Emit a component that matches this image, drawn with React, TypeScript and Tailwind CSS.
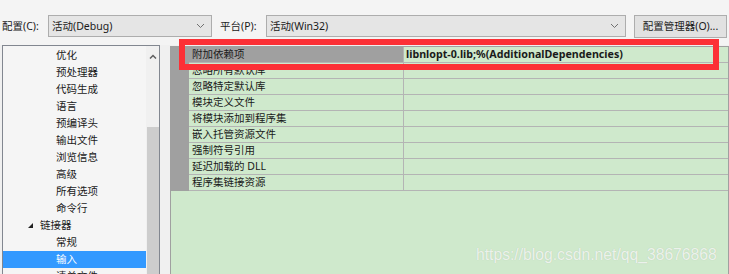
import React from 'react';

const treeItems = [
  { label: '优化', level: 2 },
  { label: '预处理器', level: 2 },
  { label: '代码生成', level: 2 },
  { label: '语言', level: 2 },
  { label: '预编译头', level: 2 },
  { label: '输出文件', level: 2 },
  { label: '浏览信息', level: 2 },
  { label: '高级', level: 2 },
  { label: '所有选项', level: 2 },
  { label: '命令行', level: 2 },
  { label: '链接器', level: 1 },
  { label: '常规', level: 2 },
  { label: '输入', level: 2, selected: true },
  { label: '清单文件', level: 2 },
];

const props = [
  '附加依赖项',
  '忽略所有默认库',
  '忽略特定默认库',
  '模块定义文件',
  '将模块添加到程序集',
  '嵌入托管资源文件',
  '强制符号引用',
  '延迟加载的 DLL',
  '程序集链接资源',
];

const Chevron = () => (
  <svg width="9" height="6" viewBox="0 0 9 6" className="shrink-0">
    <path d="M1 1 L4.5 4.5 L8 1" fill="none" stroke="#707070" strokeWidth="1" />
  </svg>
);

const Combo: React.FC<{ text: string; width: string }> = ({ text, width }) => (
  <div className={`${width} h-[22px] bg-[#e5e5e5] border border-[#adadad] flex items-center pl-[3px] pr-[6px]`}>
    <span className="flex-1 text-[#1a1a1a]">{text}</span>
    <Chevron />
  </div>
);

export default function App() {
  return (
    <div
      className="relative w-[729px] h-[274px] overflow-hidden bg-[#f0f0f0] text-[10.5px] leading-none"
      style={{ fontFamily: '"Noto Sans", "Noto Sans CJK SC", sans-serif' }}
    >
      {/* toolbar */}
      <div className="h-[45px] bg-[#f4f4f4] pt-[15px] flex items-start">
        <span className="ml-[2px] w-[46px] h-[22px] flex items-center text-[#1a1a1a]">配置(C):</span>
        <Combo text="活动(Debug)" width="w-[164px]" />
        <span className="ml-[8px] w-[46px] h-[22px] flex items-center text-[#1a1a1a]">平台(P):</span>
        <Combo text="活动(Win32)" width="w-[360px]" />
        <div className="ml-[8px] w-[93px] h-[23px] bg-[#e1e1e1] border border-[#adadad] flex items-center justify-center text-[#1a1a1a]">
          配置管理器(O)...
        </div>
      </div>

      <div className="flex h-[229px]">
        {/* tree */}
        <div className="ml-[2px] w-[158px] border-t border-r border-l border-[#828790] bg-[#f5f5f5] flex">
          <div className="flex-1 pt-[1px]">
            {treeItems.map((it, i) => (
              <div
                key={i}
                className={`h-[17px] flex items-center ${it.selected ? 'bg-[#3399ff] text-white' : 'text-[#1a1a1a]'}`}
                style={{ paddingLeft: it.level === 1 ? 25 : 53 }}
              >
                {it.level === 1 && (
                  <svg width="5" height="5" viewBox="0 0 5 5" className="mr-[7px]">
                    <polygon points="5,0 5,5 0,5" fill="#222" />
                  </svg>
                )}
                {it.label}
              </div>
            ))}
          </div>
          <div className="w-[13px] bg-[#f0f0f0] flex flex-col items-center">
            <svg width="8" height="5" viewBox="0 0 8 5" className="mt-[8px]">
              <path d="M1 4.5 L4 1.5 L7 4.5" fill="none" stroke="#606060" strokeWidth="1.5" />
            </svg>
            <div className="mt-[68px] w-[12px] flex-1 bg-[#cdcdcd]" />
          </div>
        </div>

        {/* property grid */}
        <div className="ml-[10px] flex-1 mt-[1px] border-t border-l border-r border-[#a0a0a0] bg-[#cfe9cc] flex flex-col">
          <div className="flex">
            <div className="w-[18px] bg-[#a0a0a0]" />
            <div className="flex-1">
              {props.map((p, i) => (
                <div key={i} className="h-[16px] flex border-b border-[#b4b4b4]">
                  <div
                    className={`w-[215px] border-r border-[#b4b4b4] flex items-center pl-[3px] text-[#1a1a1a] ${i === 0 ? 'bg-[#a0a0a0]' : ''}`}
                  >
                    {p}
                  </div>
                  <div className="flex-1 flex items-center pl-[2px] font-bold text-[10.7px] text-[#1a1a1a]">
                    {i === 0 ? 'libnlopt-0.lib;%(AdditionalDependencies)' : ''}
                  </div>
                </div>
              ))}
            </div>
          </div>
        </div>
      </div>

      {/* highlight box */}
      <div className="absolute left-[179px] top-[39px] w-[540px] h-[31px] border-[6px] border-[#fc3036]" />

      {/* watermark */}
      <div
        className="absolute left-[476px] top-[247px] text-[15.7px] text-white/75"
        style={{ fontFamily: '"Liberation Sans", Arial, sans-serif', textShadow: '0 0 1px rgba(0,0,0,0.15)' }}
      >
        https://blog.csdn.net/qq_38676868
      </div>
    </div>
  );
}
